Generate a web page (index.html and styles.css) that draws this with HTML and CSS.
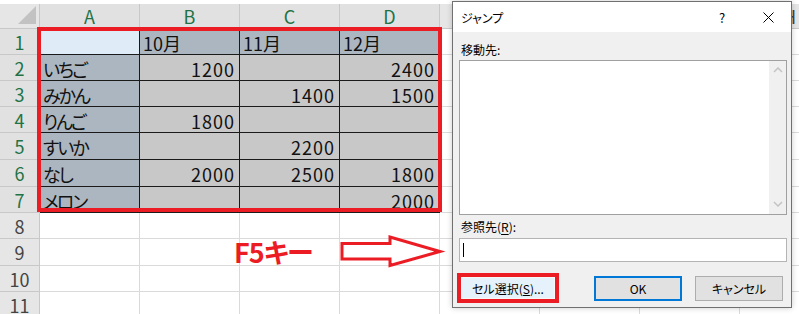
FILE: index.html
```html
<!DOCTYPE html>
<html lang="ja">
<head>
  <meta charset="UTF-8">
  <title>ジャンプ</title>
  <link rel="stylesheet" href="styles.css">
</head>
<body>

<div class="top"></div>

<div class="sheet">
  <!-- 見出し行 -->
  <div class="hd corner"><svg width="18" height="18" viewBox="0 0 18 18"><path d="M18 0V18H0Z" fill="#c2c2c2"/></svg></div>
  <div class="hd on">A</div><div class="hd on">B</div><div class="hd on">C</div><div class="hd on">D</div>
  <div class="hd">E</div><div class="hd">F</div><div class="hd">G</div><div class="hd">H</div>

  <!-- 1 -->
  <div class="hd on">1</div>
  <div class="t a"></div><div class="t f">10月</div><div class="t f">11月</div><div class="t f">12月</div>
  <div></div><div></div><div></div><div></div>
  <!-- 2 -->
  <div class="hd on">2</div>
  <div class="t f k">いちご</div><div class="t g n">1200</div><div class="t g"></div><div class="t g n">2400</div>
  <div></div><div></div><div></div><div></div>
  <!-- 3 -->
  <div class="hd on">3</div>
  <div class="t f k">みかん</div><div class="t g"></div><div class="t g n">1400</div><div class="t g n">1500</div>
  <div></div><div></div><div></div><div></div>
  <!-- 4 -->
  <div class="hd on">4</div>
  <div class="t f k">りんご</div><div class="t g n">1800</div><div class="t g"></div><div class="t g"></div>
  <div></div><div></div><div></div><div></div>
  <!-- 5 -->
  <div class="hd on">5</div>
  <div class="t f k">すいか</div><div class="t g"></div><div class="t g n">2200</div><div class="t g"></div>
  <div></div><div></div><div></div><div></div>
  <!-- 6 -->
  <div class="hd on">6</div>
  <div class="t f k">なし</div><div class="t g n">2000</div><div class="t g n">2500</div><div class="t g n">1800</div>
  <div></div><div></div><div></div><div></div>
  <!-- 7 -->
  <div class="hd on">7</div>
  <div class="t f k">メロン</div><div class="t g"></div><div class="t g"></div><div class="t g n">2000</div>
  <div></div><div></div><div></div><div></div>
  <!-- 8-11 -->
  <div class="hd">8</div>
  <div></div><div></div><div></div><div></div><div></div><div></div><div></div><div></div>
  <div class="hd">9</div>
  <div></div><div></div><div></div><div></div><div></div><div></div><div></div><div></div>
  <div class="hd">10</div>
  <div></div><div></div><div></div><div></div><div></div><div></div><div></div><div></div>
  <div class="hd">11</div>
  <div></div><div></div><div></div><div></div><div></div><div></div><div></div><div></div>
</div>

<!-- 注釈 -->
<div class="pick"></div>
<div class="note">F5キー</div>
<svg class="arrow" width="110" height="40" viewBox="336 232 110 40">
  <path d="M342 243.5H390V237L440 251.5L390 265.5V259H342Z" fill="#fff" stroke="#ec1c24" stroke-width="3"/>
</svg>

<!-- ジャンプ ダイアログ -->
<div class="dialog">
  <div class="titlebar">
    <span class="title">ジャンプ</span>
    <span class="tbtn">?</span>
    <span class="tbtn"><svg width="11" height="11" viewBox="0 0 11 11"><path d="M0.5 0.5L10.5 10.5M10.5 0.5L0.5 10.5" stroke="#000" stroke-width="1"/></svg></span>
  </div>
  <div class="dbody">
    <div class="label">移動先:</div>
    <div class="listbox">
      <div class="items"></div>
      <div class="scroll">
        <svg width="10" height="6" viewBox="0 0 10 6"><path d="M1 5L5 1L9 5" fill="none" stroke="#c4c4c4" stroke-width="1.5"/></svg>
        <svg width="10" height="6" viewBox="0 0 10 6"><path d="M1 1L5 5L9 1" fill="none" stroke="#c4c4c4" stroke-width="1.5"/></svg>
      </div>
    </div>
    <div class="label">参照先(<u>R</u>):</div>
    <div class="input"><span class="caret"></span></div>
    <div class="buttons">
      <div class="mark"><div class="btn special">セル選択(<u>S</u>)...</div></div>
      <div class="btn ok">OK</div>
      <div class="btn">キャンセル</div>
    </div>
  </div>
</div>

</body>
</html>
```

FILE: styles.css
```css
* {
  box-sizing: border-box;
}
body {
  margin: 0;
  width: 799px;
  height: 314px;
  overflow: hidden;
  position: relative;
  background: #fff;
  font-family: "Noto Sans CJK JP", sans-serif;
  font-feature-settings: "palt";
}
.top {
  height: 4px;
  background: #fff;
}

/* シート */
.sheet {
  display: grid;
  grid-template-columns: 40px repeat(8, 100px);
  grid-template-rows: 25px 26px 26px 26px 26px 27px 27px 26px 26px 27px 26px 26px;
  font-size: 18px;
  color: #111;
}
.sheet > div {
  border-right: 1px solid #dadada;
  border-bottom: 1px solid #dadada;
  display: flex;
  align-items: center;
  padding: 2px 4px 0 3px;
  white-space: nowrap;
  overflow: hidden;
}
.sheet .hd {
  background: #e6e6e6;
  border-color: #c8c8c8;
  justify-content: center;
  color: #444;
  padding: 0;
}
.sheet .hd.on {
  color: #217346;
  background: #e1e1e1;
}
.sheet .corner {
  justify-content: flex-end;
  align-items: flex-end;
  padding: 0 3px 4px 0;
}
.sheet .t {
  border-color: #1a1a1a;
}
.f {
  background: #acb6c0;
}
.g {
  background: #c8c8c8;
}
.a {
  background: #dfebf6;
}
.n {
  justify-content: flex-end;
  letter-spacing: 1px;
}
.k {
  letter-spacing: -2px;
}

/* 注釈 */
.pick {
  position: absolute;
  left: 37px;
  top: 27px;
  width: 405px;
  height: 185px;
  border: 4px solid #ec1c24;
}
.note {
  position: absolute;
  left: 234px;
  top: 236px;
  font-size: 27px;
  font-weight: bold;
  line-height: 32px;
  color: #ec1c24;
  letter-spacing: -1px;
}
.arrow {
  position: absolute;
  left: 336px;
  top: 232px;
}

/* ダイアログ */
.dialog {
  position: absolute;
  left: 452px;
  top: 1px;
  width: 340px;
  height: 307px;
  border: 1px solid #707070;
  background: #f0f0f0;
  box-shadow: 0 0 6px rgba(0, 0, 0, 0.2);
  font-size: 12px;
  color: #000;
  display: flex;
  flex-direction: column;
}
.titlebar {
  height: 30px;
  background: #fff;
  display: flex;
  align-items: center;
  padding-left: 8px;
}
.title {
  flex: 1;
}
.tbtn {
  width: 46px;
  height: 30px;
  display: flex;
  align-items: center;
  justify-content: center;
  font-size: 13px;
}
.dbody {
  padding: 10px 4px 0 6px;
  display: flex;
  flex-direction: column;
}
.label {
  line-height: 16px;
  padding-left: 2px;
}
.label u {
  text-underline-offset: 2px;
}
.listbox {
  margin-top: 2px;
  height: 155px;
  border: 1px solid #a0a0a0;
  background: #fff;
  display: flex;
  margin-bottom: 4px;
}
.items {
  flex: 1;
}
.scroll {
  width: 17px;
  background: #f0f0f0;
  display: flex;
  flex-direction: column;
  justify-content: space-between;
  align-items: center;
  padding: 6px 0 7px;
}
.scroll svg {
  display: block;
}
.input {
  margin-top: 3px;
  height: 24px;
  border: 1px solid #b4b4b4;
  background: #fff;
  padding: 4px 3px;
}
.caret {
  display: block;
  width: 1px;
  height: 14px;
  background: #000;
}
.buttons {
  margin-top: 11px;
  height: 30px;
  display: flex;
  align-items: center;
}
.mark {
  margin-left: -2px;
  width: 102px;
  height: 30px;
  border: 4px solid #ec1c24;
  padding: 1px;
  background: #f7f7f7;
}
.btn {
  width: 88px;
  height: 25px;
  border: 1px solid #adadad;
  background: #e1e1e1;
  display: flex;
  align-items: center;
  justify-content: center;
}
.btn.special {
  width: 100%;
  height: 100%;
  border: 0;
  background: #e5f1fb;
}
.btn.ok {
  margin-left: 35px;
  border: 2px solid #0078d7;
}
.btn + .btn {
  margin-left: 13px;
}
```
